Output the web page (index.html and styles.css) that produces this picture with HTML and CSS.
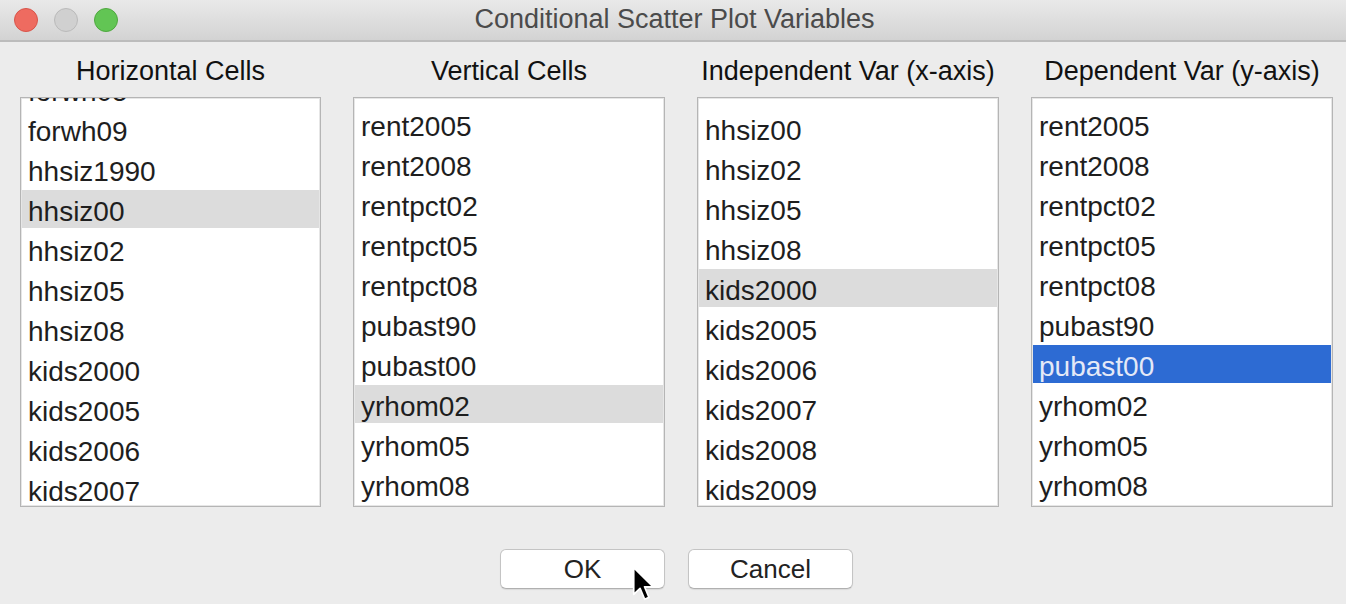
FILE: index.html
```html
<!DOCTYPE html>
<html>
<head>
<meta charset="utf-8">
<link rel="stylesheet" href="styles.css">
</head>
<body>
<div class="window">
  <div class="titlebar">
    <div class="lights">
      <span class="light red"></span>
      <span class="light gray"></span>
      <span class="light green"></span>
    </div>
    <div class="title">Conditional Scatter Plot Variables</div>
    <div></div>
  </div>
  <div class="content">
    <div class="columns">
      <div class="col c1">
        <div class="head">Horizontal Cells</div>
        <div class="list">
          <ul class="items off1">
            <li>forwh05</li>
            <li>forwh09</li>
            <li>hhsiz1990</li>
            <li class="hl">hhsiz00</li>
            <li>hhsiz02</li>
            <li>hhsiz05</li>
            <li>hhsiz08</li>
            <li>kids2000</li>
            <li>kids2005</li>
            <li>kids2006</li>
            <li>kids2007</li>
          </ul>
        </div>
      </div>
      <div class="col c2">
        <div class="head">Vertical Cells</div>
        <div class="list">
          <ul class="items off2">
            <li>rent2005</li>
            <li>rent2008</li>
            <li>rentpct02</li>
            <li>rentpct05</li>
            <li>rentpct08</li>
            <li>pubast90</li>
            <li>pubast00</li>
            <li class="hl">yrhom02</li>
            <li>yrhom05</li>
            <li>yrhom08</li>
          </ul>
        </div>
      </div>
      <div class="col c3">
        <div class="head">Independent Var (x-axis)</div>
        <div class="list">
          <ul class="items off3">
            <li>hhsiz00</li>
            <li>hhsiz02</li>
            <li>hhsiz05</li>
            <li>hhsiz08</li>
            <li class="hl">kids2000</li>
            <li>kids2005</li>
            <li>kids2006</li>
            <li>kids2007</li>
            <li>kids2008</li>
            <li>kids2009</li>
          </ul>
        </div>
      </div>
      <div class="col c4">
        <div class="head">Dependent Var (y-axis)</div>
        <div class="list">
          <ul class="items off2">
            <li>rent2005</li>
            <li>rent2008</li>
            <li>rentpct02</li>
            <li>rentpct05</li>
            <li>rentpct08</li>
            <li>pubast90</li>
            <li class="sel">pubast00</li>
            <li>yrhom02</li>
            <li>yrhom05</li>
            <li>yrhom08</li>
          </ul>
        </div>
      </div>
    </div>
    <div class="buttons">
      <button class="btn">OK</button>
      <button class="btn">Cancel</button>
    </div>
  </div>
  <svg class="cursor" width="24" height="36" viewBox="0 0 14 21">
    <path d="M1 1 V16.5 L4.7 13 L7.4 19.4 L9.9 18.3 L7.3 12.1 H12.2 Z" fill="#000" stroke="#fff" stroke-width="1" stroke-linejoin="round"/>
  </svg>
</div>
</body>
</html>
```

FILE: styles.css
```css
* { box-sizing: border-box; }
html, body {
  margin: 0;
  padding: 0;
  background: #ececec;
}
body {
  font-family: "Liberation Sans", Arial, sans-serif;
  color: #222;
  width: 1346px;
  height: 604px;
  overflow: hidden;
}
.window {
  position: relative;
  width: 1346px;
  height: 604px;
}
.titlebar {
  height: 42px;
  display: grid;
  grid-template-columns: 1fr auto 1fr;
  align-items: center;
  background: linear-gradient(#e9e9e9, #d3d3d3);
  border-bottom: 2px solid #bcbcbc;
  padding-bottom: 1px;
}
.lights {
  display: flex;
  gap: 16px;
  padding-left: 14px;
}
.light {
  width: 24px;
  height: 24px;
  border-radius: 50%;
  display: block;
}
.red { background: #ee6b60; border: 1px solid #d8544a; }
.gray { background: #d0d0d0; border: 1px solid #bababa; }
.green { background: #62c554; border: 1px solid #4fa83f; }
.title {
  font-size: 27px;
  color: #4b4b4b;
  padding-left: 3px;
}
.content {
  padding: 14px 13px 0 20px;
}
.columns {
  display: flex;
  gap: 32px;
}
.col { display: flex; flex-direction: column; }
.c1 { width: 301px; }
.c2 { width: 312px; }
.c3 { width: 302px; }
.c4 { width: 302px; }
.head {
  font-size: 27px;
  line-height: 30px;
  height: 30px;
  text-align: center;
  white-space: nowrap;
  color: #111;
}
.list {
  margin-top: 11px;
  height: 410px;
  background: #fff;
  border: 1px solid #b5b5b5;
  box-shadow: inset 0 0 0 1px #e6e6e6;
  padding: 0 1px;
  overflow: hidden;
}
.items {
  list-style: none;
  margin: 0;
  padding: 0;
}
.off1 { margin-top: -29px; }
.off2 { margin-top: 6px; }
.off3 { margin-top: 10px; }
.items li {
  height: 40px;
  padding-top: 5px;
  line-height: 33px;
  border-top: 1px solid transparent;
  border-bottom: 1px solid transparent;
  background-clip: padding-box;
  padding-left: 6px;
  font-size: 28px;
  color: #1e1e1e;
  white-space: nowrap;
}
.items li.hl { background-color: #dcdcdc; }
.items li.sel { background-color: #2d6bd3; color: #e4e9f7; }
.buttons {
  display: flex;
  justify-content: center;
  gap: 23px;
  margin-top: 42px;
}
.btn {
  width: 165px;
  height: 40px;
  background: #fff;
  border: 1px solid #c4c4c4;
  border-bottom-color: #b0b0b0;
  border-radius: 6px;
  box-shadow: 0 1px 1px rgba(0,0,0,0.08);
  font-family: "Liberation Sans", Arial, sans-serif;
  font-size: 26px;
  color: #222;
  padding: 0;
}
.cursor {
  position: absolute;
  left: 632px;
  top: 566px;
}
```
